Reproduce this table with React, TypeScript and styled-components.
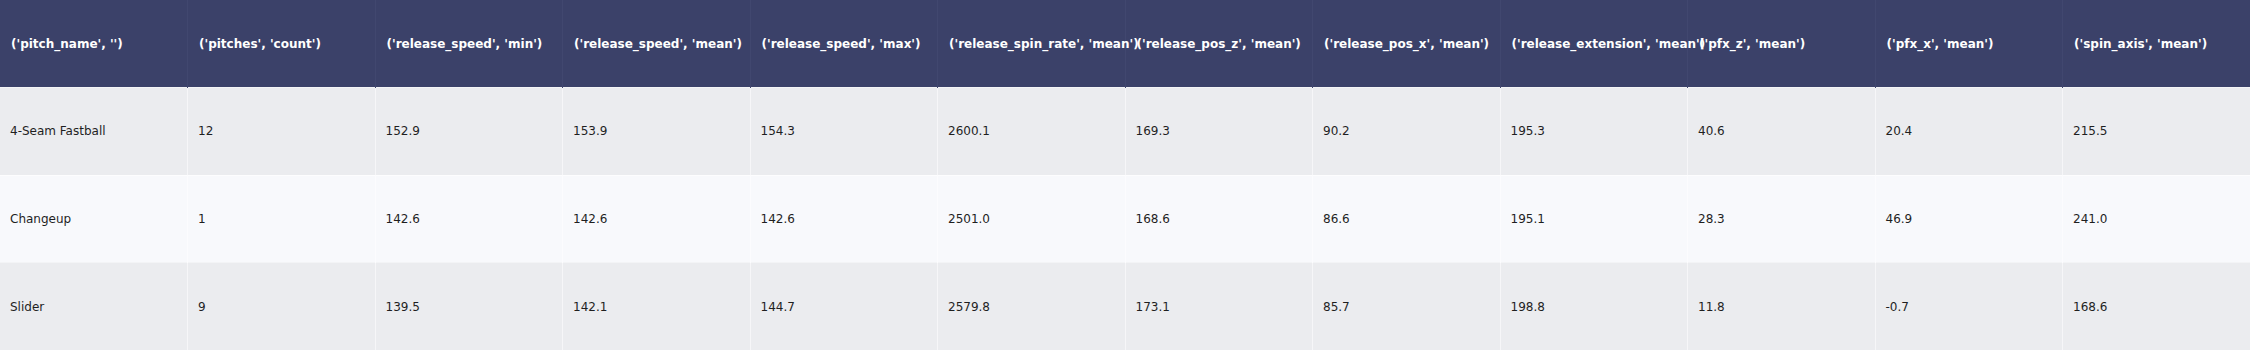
import { FC } from 'react'
import styled, { createGlobalStyle } from 'styled-components'

const GlobalStyle = createGlobalStyle`
  html, body {
    margin: 0;
    padding: 0;
    background: #ffffff;
  }
`

const Table = styled.table`
  width: 2250px;
  table-layout: fixed;
  border-collapse: collapse;
  font-family: 'DejaVu Sans', Verdana, sans-serif;
  font-size: 12px;
`

const HeadCell = styled.th`
  width: 187.5px;
  height: 87.5px;
  box-sizing: border-box;
  padding: 0 10px 0 11px;
  background: #3b4169;
  color: #ffffff;
  font-weight: bold;
  text-align: left;
  white-space: nowrap;
  overflow: visible;
  border-left: 1px solid #41476f;
  &:first-child {
    border-left: none;
  }
`

const Row = styled.tr<{ $alt: boolean }>`
  background: ${({ $alt }) => ($alt ? '#f8f9fc' : '#ebecef')};
  border-top: 1px solid ${({ $alt }) => ($alt ? '#fdfdfe' : '#f3f4f6')};
`

const Cell = styled.td`
  height: 87.5px;
  box-sizing: border-box;
  padding: 0 10px;
  color: #1f1f1f;
  white-space: nowrap;
  border-left: 1px solid rgba(255, 255, 255, 0.55);
  &:first-child {
    border-left: none;
  }
`

const columns = [
  "('pitch_name', '')",
  "('pitches', 'count')",
  "('release_speed', 'min')",
  "('release_speed', 'mean')",
  "('release_speed', 'max')",
  "('release_spin_rate', 'mean')",
  "('release_pos_z', 'mean')",
  "('release_pos_x', 'mean')",
  "('release_extension', 'mean')",
  "('pfx_z', 'mean')",
  "('pfx_x', 'mean')",
  "('spin_axis', 'mean')",
]

const rows: string[][] = [
  ['4-Seam Fastball', '12', '152.9', '153.9', '154.3', '2600.1', '169.3', '90.2', '195.3', '40.6', '20.4', '215.5'],
  ['Changeup', '1', '142.6', '142.6', '142.6', '2501.0', '168.6', '86.6', '195.1', '28.3', '46.9', '241.0'],
  ['Slider', '9', '139.5', '142.1', '144.7', '2579.8', '173.1', '85.7', '198.8', '11.8', '-0.7', '168.6'],
]

const App: FC = () => {
  return (
    <>
      <GlobalStyle />
      <Table>
        <thead>
          <tr>
            {columns.map((col) => (
              <HeadCell key={col}>{col}</HeadCell>
            ))}
          </tr>
        </thead>
        <tbody>
          {rows.map((row, i) => (
            <Row key={row[0]} $alt={i % 2 === 1}>
              {row.map((value, j) => (
                <Cell key={j}>{value}</Cell>
              ))}
            </Row>
          ))}
        </tbody>
      </Table>
    </>
  )
}

export default App
